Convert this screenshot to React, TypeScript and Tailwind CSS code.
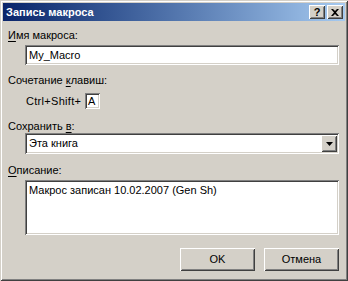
const sunken =
  "shadow-[inset_1px_1px_0_#808080,inset_-1px_-1px_0_#ffffff,inset_2px_2px_0_#404040,inset_-2px_-2px_0_#d4d0c8]"
const raised =
  "shadow-[inset_1px_1px_0_#ffffff,inset_-1px_-1px_0_#404040,inset_2px_2px_0_#d4d0c8,inset_-2px_-2px_0_#808080]"

function TitleButton({ children }: { children: React.ReactNode }) {
  return (
    <div className={`w-[16px] h-[14px] bg-[#d4d0c8] ${raised} flex items-center justify-center`}>
      {children}
    </div>
  )
}

function Label({ children }: { children: React.ReactNode }) {
  return <div className="ml-[5px] h-[13px] leading-[13px]">{children}</div>
}

function Button({ label }: { label: string }) {
  return (
    <div className={`w-[75px] h-[23px] bg-[#d4d0c8] ${raised} flex items-center justify-center`}>
      {label}
    </div>
  )
}

export default function App() {
  return (
    <div
      className="w-[348px] h-[281px] bg-[#d4d0c8] text-[11px] text-black flex flex-col p-[3px] shadow-[inset_1px_1px_0_#d4d0c8,inset_-1px_-1px_0_#404040,inset_2px_2px_0_#ffffff,inset_-2px_-2px_0_#808080]"
      style={{ fontFamily: '"Liberation Sans", Arial, sans-serif' }}
    >
      <div className="h-[18px] flex items-center pl-[3px] pr-[2px] bg-gradient-to-r from-[#0a246a] to-[#a6caf0]">
        <span className="flex-1 text-white font-bold text-[11px]">Запись макроса</span>
        <div className="flex gap-[2px]">
          <TitleButton>
            <span className="font-bold text-[11px] leading-none">?</span>
          </TitleButton>
          <TitleButton>
            <svg width="8" height="7" viewBox="0 0 8 7">
              <path d="M0 0h2l2 2 2-2h2L5 3.5 8 7H6L4 5 2 7H0l3-3.5z" fill="#000" />
            </svg>
          </TitleButton>
        </div>
      </div>

      <div className="flex flex-col">
        <div className="mt-[8px]">
          <Label>
            <u className="underline-offset-2">И</u>мя макроса:
          </Label>
        </div>
        <div className={`mt-[3px] ml-[22px] w-[314px] h-[20px] bg-white ${sunken} flex items-center pl-[4px]`}>
          My_Macro
        </div>

        <div className="mt-[9px]">
          <Label>
            Сочетание <u className="underline-offset-2">к</u>лавиш:
          </Label>
        </div>
        <div className="mt-[6px] ml-[22px] h-[16px] flex items-center">
          <span className="w-[60px] pl-[1px] tracking-[0.3px]">Ctrl+Shift+</span>
          <div className={`w-[15px] h-[16px] bg-white ${sunken} flex items-center pl-[3px]`}>A</div>
        </div>

        <div className="mt-[11px]">
          <Label>
            Сохранить <u className="underline-offset-2">в</u>:
          </Label>
        </div>
        <div className={`ml-[22px] w-[314px] h-[21px] bg-white ${sunken} flex items-center p-[2px]`}>
          <span className="flex-1 pl-[2px]">Эта книга</span>
          <div className={`w-[16px] h-[17px] bg-[#d4d0c8] ${raised} flex items-center justify-center`}>
            <svg width="7" height="4" viewBox="0 0 7 4">
              <path d="M0 0h7L3.5 4z" fill="#000" />
            </svg>
          </div>
        </div>

        <div className="mt-[10px]">
          <Label>
            <u className="underline-offset-2">О</u>писание:
          </Label>
        </div>
        <div className={`mt-[3px] ml-[22px] w-[314px] h-[55px] bg-white ${sunken} pl-[4px] pt-[4px] leading-[13px]`}>
          Макрос записан 10.02.2007 (Gen Sh)
        </div>

        <div className="mt-[13px] ml-[177px] flex gap-[9px]">
          <Button label="OK" />
          <Button label="Отмена" />
        </div>
      </div>
    </div>
  )
}
